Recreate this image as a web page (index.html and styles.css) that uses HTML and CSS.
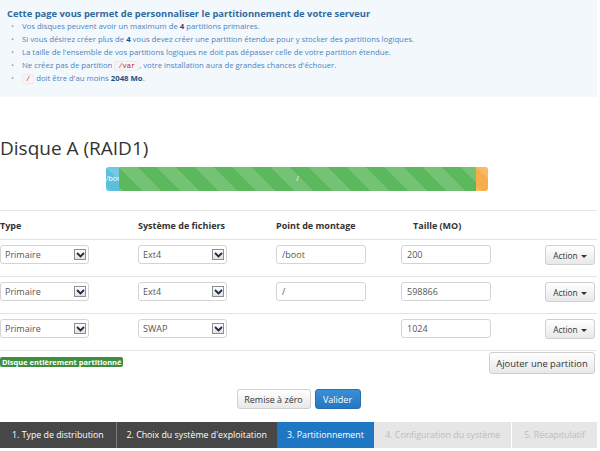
FILE: index.html
```html
<!DOCTYPE html>
<html lang="fr">
<head>
    <meta charset="UTF-8">
    <meta name="viewport" content="width=device-width, initial-scale=1.0">
    <title>Partitionnement</title>
    <link rel="stylesheet" href="styles.css">
</head>
<body>
    <div class="notice">
        <p class="notice-title">Cette page vous permet de personnaliser le partitionnement de votre serveur</p>
        <ul>
            <li>Vos disques peuvent avoir un maximum de <strong>4</strong> partitions primaires.</li>
            <li>Si vous désirez créer plus de <strong>4</strong> vous devez créer une partition étendue pour y stocker des partitions logiques.</li>
            <li>La taille de l'ensemble de vos partitions logiques ne doit pas dépasser celle de votre partition étendue.</li>
            <li>Ne créez pas de partition <code>/var</code>, votre installation aura de grandes chances d'échouer.</li>
            <li><code>/</code> doit être d'au moins <strong>2048 Mo</strong>.</li>
        </ul>
    </div>

    <h1>Disque A (RAID1)</h1>

    <div class="progress">
        <div class="bar bar-info" style="width:3.4%">/boot</div>
        <div class="bar bar-success" style="width:93.5%">/</div>
        <div class="bar bar-warning" style="width:3.1%"></div>
    </div>

    <table class="partitions">
        <thead>
            <tr>
                <th class="col-type">Type</th>
                <th class="col-fs">Système de fichiers</th>
                <th class="col-mount">Point de montage</th>
                <th class="col-size">Taille (MO)</th>
                <th></th>
            </tr>
        </thead>
        <tbody>
            <tr>
                <td><div class="select"><select><option>Primaire</option></select><span class="arrow"><svg width="9" height="6" viewBox="0 0 9 6"><path d="M1 1l3.5 3.5L8 1" fill="none" stroke="#1c2a4a" stroke-width="1.8"/></svg></span></div></td>
                <td><div class="select"><select><option>Ext4</option></select><span class="arrow"><svg width="9" height="6" viewBox="0 0 9 6"><path d="M1 1l3.5 3.5L8 1" fill="none" stroke="#1c2a4a" stroke-width="1.8"/></svg></span></div></td>
                <td><input type="text" value="/boot"></td>
                <td><input type="text" value="200"></td>
                <td class="cell-action"><button class="btn btn-action">Action <span class="caret"></span></button></td>
            </tr>
            <tr>
                <td><div class="select"><select><option>Primaire</option></select><span class="arrow"><svg width="9" height="6" viewBox="0 0 9 6"><path d="M1 1l3.5 3.5L8 1" fill="none" stroke="#1c2a4a" stroke-width="1.8"/></svg></span></div></td>
                <td><div class="select"><select><option>Ext4</option></select><span class="arrow"><svg width="9" height="6" viewBox="0 0 9 6"><path d="M1 1l3.5 3.5L8 1" fill="none" stroke="#1c2a4a" stroke-width="1.8"/></svg></span></div></td>
                <td><input type="text" value="/"></td>
                <td><input type="text" value="598866"></td>
                <td class="cell-action"><button class="btn btn-action">Action <span class="caret"></span></button></td>
            </tr>
            <tr>
                <td><div class="select"><select><option>Primaire</option></select><span class="arrow"><svg width="9" height="6" viewBox="0 0 9 6"><path d="M1 1l3.5 3.5L8 1" fill="none" stroke="#1c2a4a" stroke-width="1.8"/></svg></span></div></td>
                <td><div class="select"><select><option>SWAP</option></select><span class="arrow"><svg width="9" height="6" viewBox="0 0 9 6"><path d="M1 1l3.5 3.5L8 1" fill="none" stroke="#1c2a4a" stroke-width="1.8"/></svg></span></div></td>
                <td></td>
                <td><input type="text" value="1024"></td>
                <td class="cell-action"><button class="btn btn-action">Action <span class="caret"></span></button></td>
            </tr>
        </tbody>
    </table>

    <div class="table-footer">
        <span class="badge">Disque entièrement partitionné</span>
        <button class="btn btn-add">Ajouter une partition</button>
    </div>

    <div class="form-actions">
        <button class="btn btn-reset">Remise à zéro</button>
        <button class="btn btn-primary">Valider</button>
    </div>

    <div class="steps">
        <div class="step step-done step-1">1. Type de distribution</div>
        <div class="step step-done step-2">2. Choix du système d'exploitation</div>
        <div class="step step-current step-3">3. Partitionnement</div>
        <div class="step step-todo step-4">4. Configuration du système</div>
        <div class="step step-todo step-5">5. Récapitulatif</div>
    </div>
</body>
</html>
```

FILE: styles.css
```css
body {
    margin: 0;
    width: 597px;
    font-family: "Open Sans", "DejaVu Sans", sans-serif;
    font-size: 9px;
    color: #333;
}
.notice {
    background-color: #f3f8fd;
    padding: 8px 7px 12px;
}
.notice-title {
    margin: 0;
    font-size: 9.4px;
    font-weight: bold;
    line-height: 12px;
    color: #2f6aa0;
}
.notice ul {
    margin: 0;
    padding: 0 0 0 4px;
    list-style: none;
    font-size: 7.75px;
    color: #4b85bd;
}
.notice li {
    height: 13px;
    line-height: 13px;
}
.notice li::before {
    content: "•";
    display: inline-block;
    width: 11px;
    color: #8aa9c8;
}
.notice strong {
    color: #234f7d;
}
code {
    font-family: "Liberation Mono", monospace;
    font-size: 7px;
    line-height: 1;
    color: #c7254e;
    background-color: #f8f3f5;
    border: 1px solid #ececec;
    border-radius: 2px;
    padding: 0 3px;
}
h1 {
    margin: 38px 0 6px;
    font-size: 19px;
    line-height: 26px;
    font-weight: normal;
    color: #333;
}
.progress {
    display: flex;
    margin-left: 106px;
    width: 382px;
    height: 24px;
    border-radius: 3px;
    overflow: hidden;
}
.bar {
    height: 100%;
    color: white;
    font-size: 7px;
    line-height: 24px;
    text-align: center;
    white-space: nowrap;
    overflow: hidden;
    background-image: linear-gradient(45deg, rgba(255,255,255,.15) 25%, transparent 25%, transparent 50%, rgba(255,255,255,.15) 50%, rgba(255,255,255,.15) 75%, transparent 75%, transparent);
    background-size: 38px 38px;
}
.bar-info {
    background-color: #5bc0de;
    text-align: left;
}
.bar-success {
    background-color: #5cb85c;
}
.bar-warning {
    background-color: #f6ad4a;
}
.partitions {
    width: 100%;
    margin-top: 19px;
    border-collapse: collapse;
    border-top: 1px solid #e4e4e4;
}
.partitions th {
    height: 28px;
    padding: 0;
    text-align: left;
    font-weight: bold;
    border-bottom: 1px solid #e4e4e4;
}
.partitions td {
    padding: 5px 0 11px;
    vertical-align: top;
    border-bottom: 1px solid #e4e4e4;
}
.col-type, .col-fs {
    width: 138px;
}
.col-mount {
    width: 125px;
}
.col-size {
    width: 100px;
}
.partitions th.col-size {
    padding-left: 12px;
}
.cell-action {
    text-align: right;
}
.select {
    position: relative;
    width: 89px;
    height: 19px;
}
.select select {
    appearance: none;
    width: 100%;
    height: 100%;
    box-sizing: border-box;
    border: 1px solid #d4d4d4;
    border-radius: 3px;
    background: white;
    font-family: inherit;
    font-size: 9px;
    color: #555;
    padding: 0 4px;
}
.arrow {
    position: absolute;
    top: 4px;
    right: 3px;
    width: 12px;
    height: 11px;
    box-sizing: border-box;
    border: 1px solid #8d8d8d;
    background: linear-gradient(#fdfdfd, #e2e2e2);
    display: flex;
    align-items: center;
    justify-content: center;
    pointer-events: none;
}
input {
    width: 90px;
    height: 19px;
    box-sizing: border-box;
    border: 1px solid #d4d4d4;
    border-radius: 3px;
    padding: 0 5px;
    font-family: inherit;
    font-size: 9px;
    color: #555;
}
.btn {
    font-family: inherit;
    font-size: 9px;
    color: #333;
    border: 1px solid #cfcfcf;
    border-radius: 3px;
    background: linear-gradient(#ffffff, #e8e8e8);
    box-sizing: border-box;
    padding: 0;
    cursor: pointer;
}
.btn-action {
    width: 50px;
    height: 20px;
    margin-right: 2px;
    font-size: 8.3px;
}
.caret {
    display: inline-block;
    width: 0;
    height: 0;
    margin-left: 1px;
    vertical-align: middle;
    border-top: 3px solid #333;
    border-left: 3px solid transparent;
    border-right: 3px solid transparent;
}
.table-footer {
    display: flex;
    justify-content: space-between;
    align-items: flex-start;
    margin-top: 1px;
}
.badge {
    margin-top: 5px;
    padding: 0 2px;
    line-height: 10px;
    font-size: 7.5px;
    font-weight: bold;
    color: white;
    background-color: #3e8e3e;
    border-radius: 2px;
}
.btn-add {
    width: 106px;
    height: 22px;
    margin-right: 2px;
    font-size: 9.4px;
}
.form-actions {
    display: flex;
    justify-content: center;
    gap: 4px;
    margin-top: 15px;
}
.btn-reset {
    width: 74px;
    height: 20px;
}
.btn-primary {
    width: 46px;
    height: 20px;
    color: white;
    border-color: #2a6cb0;
    background: linear-gradient(#3a8fd6, #2477c2);
}
.steps {
    display: flex;
    margin-top: 13px;
    height: 26px;
}
.step {
    display: flex;
    align-items: center;
    justify-content: center;
    font-size: 8.8px;
    white-space: nowrap;
}
.step-done {
    background-color: #474747;
    color: white;
}
.step-current {
    background-color: #1f77c3;
    color: white;
}
.step-todo {
    background-color: #e6e6e6;
    color: #bcbcbc;
}
.step-1 { width: 116px; }
.step-2 { width: 160px; border-left: 1px solid #7a7a7a; }
.step-3 { width: 98px; }
.step-4 { width: 137px; }
.step-5 { width: 85px; border-left: 1px solid #fff; }
```
